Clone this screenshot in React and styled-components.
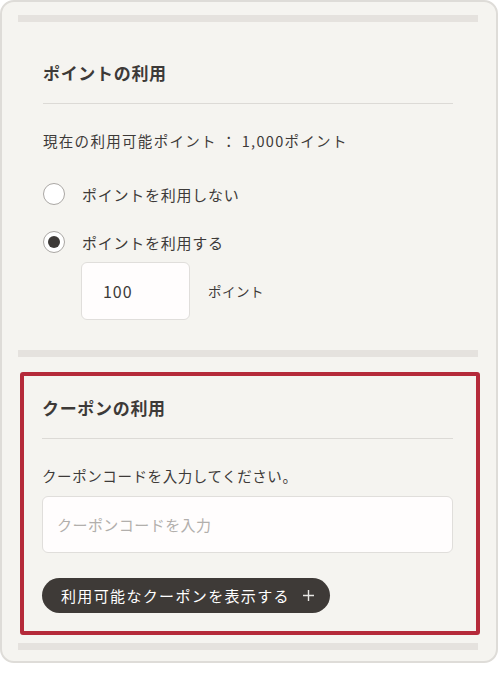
import React from 'react';
import styled, { createGlobalStyle } from 'styled-components';

const GlobalStyle = createGlobalStyle`
  body {
    margin: 0;
    background: #ffffff;
    font-family: "Noto Sans CJK JP", "Noto Sans", sans-serif;
    color: #3d3a38;
  }
  * { box-sizing: border-box; }
`;

const Card = styled.div`
  width: 498px;
  background: #f5f4f0;
  border: 2px solid #dedcd8;
  border-radius: 14px;
  padding: 13px 18px 11px 16px;
`;

const Bar = styled.div`
  height: 7px;
  background: #e5e2de;
  margin-top: ${p => p.$top || 0}px;
`;

const Section = styled.section`
  padding: 39px 25px 30px;
`;

const CouponBox = styled.section`
  margin: 15px -2px 0 2px;
  border: 4px solid #b52a3a;
  border-radius: 3px;
  padding: 20px 23px 18px 18px;
`;

const Heading = styled.h2`
  margin: 0;
  font-size: 17px;
  line-height: 24px;
  font-weight: 700;
  letter-spacing: 0.04em;
  padding-bottom: 18px;
  border-bottom: 1px solid #dcdad6;
`;

const Text = styled.p`
  margin: 27px 0 0;
  font-size: 14.5px;
  line-height: 20px;
  letter-spacing: ${p => p.$wide ? '0.09em' : '0.04em'};
`;

const RadioList = styled.div`
  margin-top: 31px;
  display: flex;
  flex-direction: column;
  gap: 24px;
`;

const RadioRow = styled.label`
  display: flex;
  align-items: center;
  gap: 17px;
  height: 24px;
  font-size: 15px;
  letter-spacing: 0.05em;
`;

const Circle = styled.span`
  width: 22px;
  height: 22px;
  border-radius: 50%;
  border: 1.5px solid #aaa7a4;
  background: #ffffff;
  display: flex;
  align-items: center;
  justify-content: center;
  flex-shrink: 0;
  &::after {
    content: '';
    width: 12px;
    height: 12px;
    border-radius: 50%;
    background: ${p => (p.$checked ? '#3d3a38' : 'transparent')};
  }
`;

const AmountRow = styled.div`
  margin: 8px 0 0 38px;
  display: flex;
  align-items: center;
  gap: 18px;
`;

const AmountInput = styled.div`
  width: 109px;
  height: 58px;
  background: #fffdfd;
  border: 1px solid #e0dedb;
  border-radius: 6px;
  display: flex;
  align-items: center;
  padding-left: 21px;
  font-size: 16px;
  letter-spacing: 0.06em;
`;

const Unit = styled.span`
  font-size: 13.5px;
  letter-spacing: 0.04em;
`;

const CodeInput = styled.div`
  margin-top: 10px;
  height: 57px;
  background: #fffdfd;
  border: 1px solid #e0dedb;
  border-radius: 6px;
  display: flex;
  align-items: center;
  padding-left: 14px;
  font-size: 15px;
  letter-spacing: 0.03em;
  color: #b2afac;
`;

const PillButton = styled.button`
  margin-top: 25px;
  height: 35px;
  padding: 0 15px 0 19px;
  border: none;
  border-radius: 18px;
  background: #3e3a37;
  color: #ffffff;
  font-family: inherit;
  font-size: 15px;
  letter-spacing: 0.09em;
  display: inline-flex;
  align-items: center;
  gap: 12px;
`;

const Plus = () => (
  <svg width="13" height="13" viewBox="0 0 13 13" fill="none">
    <path d="M6.5 1v11M1 6.5h11" stroke="#e8e6e3" strokeWidth="1.4" />
  </svg>
);

export default function App() {
  return (
    <>
      <GlobalStyle />
      <Card>
        <Bar />
        <Section>
          <Heading>ポイントの利用</Heading>
          <Text $wide>現在の利用可能ポイント ： 1,000ポイント</Text>
          <RadioList>
            <RadioRow>
              <Circle />
              ポイントを利用しない
            </RadioRow>
            <RadioRow>
              <Circle $checked />
              ポイントを利用する
            </RadioRow>
          </RadioList>
          <AmountRow>
            <AmountInput>100</AmountInput>
            <Unit>ポイント</Unit>
          </AmountRow>
        </Section>
        <Bar />
        <CouponBox>
          <Heading>クーポンの利用</Heading>
          <Text>クーポンコードを入力してください。</Text>
          <CodeInput>クーポンコードを入力</CodeInput>
          <PillButton>
            利用可能なクーポンを表示する
            <Plus />
          </PillButton>
        </CouponBox>
        <Bar $top={8} />
      </Card>
    </>
  );
}
